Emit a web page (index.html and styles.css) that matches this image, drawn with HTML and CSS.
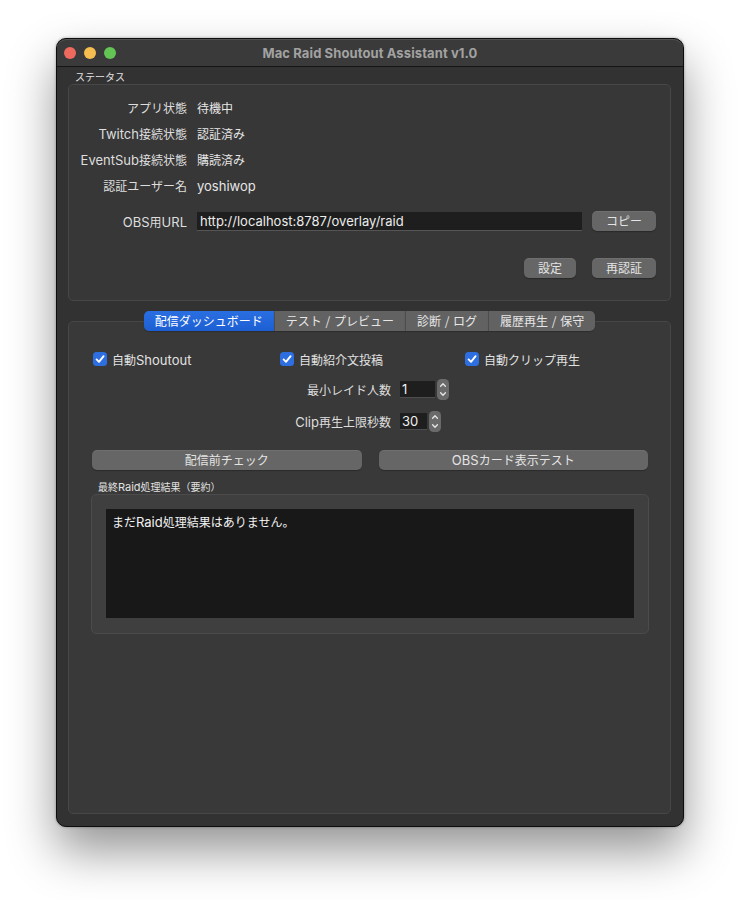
FILE: index.html
```html
<!DOCTYPE html>
<html lang="ja">
<head>
<meta charset="utf-8">
<title>Mac Raid Shoutout Assistant v1.0</title>
<link rel="stylesheet" href="styles.css">
</head>
<body>
<div class="window">
  <header class="titlebar">
    <div class="lights">
      <span class="light red"></span>
      <span class="light yellow"></span>
      <span class="light green"></span>
    </div>
    <div class="title">Mac Raid Shoutout Assistant v1.0</div>
    <div></div>
  </header>

  <main class="content">
    <div class="caption">ステータス</div>
    <section class="group status">
      <div class="form">
        <div class="lbl">アプリ状態</div><div class="val">待機中</div>
        <div class="lbl"><span class="en">Twitch</span>接続状態</div><div class="val">認証済み</div>
        <div class="lbl"><span class="en">EventSub</span>接続状態</div><div class="val">購読済み</div>
        <div class="lbl">認証ユーザー名</div><div class="val"><span class="en">yoshiwop</span></div>
      </div>
      <div class="url-row">
        <div class="lbl"><span class="en">OBS</span>用<span class="en">URL</span></div>
        <div class="field en">http://localhost:8787/overlay/raid</div>
        <button class="btn w64">コピー</button>
      </div>
      <div class="actions">
        <button class="btn w52">設定</button>
        <button class="btn w64">再認証</button>
      </div>
    </section>

    <section class="tabs">
      <nav class="tabbar">
        <div class="tab active">配信ダッシュボード</div>
        <div class="tab">テスト / プレビュー</div>
        <div class="tab">診断 / ログ</div>
        <div class="tab">履歴再生 / 保守</div>
      </nav>
      <div class="pane">
        <div class="checks">
          <label class="check">
            <svg class="box" width="14" height="14" viewBox="0 0 14 14"><rect width="14" height="14" rx="3.5" fill="#2d6fe0"/><path d="M3.6 7.4 L6 9.8 L10.6 4.2" fill="none" stroke="#fff" stroke-width="1.9" stroke-linecap="round" stroke-linejoin="round"/></svg>
            <span>自動<span class="en">Shoutout</span></span>
          </label>
          <label class="check">
            <svg class="box" width="14" height="14" viewBox="0 0 14 14"><rect width="14" height="14" rx="3.5" fill="#2d6fe0"/><path d="M3.6 7.4 L6 9.8 L10.6 4.2" fill="none" stroke="#fff" stroke-width="1.9" stroke-linecap="round" stroke-linejoin="round"/></svg>
            <span>自動紹介文投稿</span>
          </label>
          <label class="check">
            <svg class="box" width="14" height="14" viewBox="0 0 14 14"><rect width="14" height="14" rx="3.5" fill="#2d6fe0"/><path d="M3.6 7.4 L6 9.8 L10.6 4.2" fill="none" stroke="#fff" stroke-width="1.9" stroke-linecap="round" stroke-linejoin="round"/></svg>
            <span>自動クリップ再生</span>
          </label>
        </div>

        <div class="spins">
          <div class="lbl">最小レイド人数</div>
          <div class="spin">
            <div class="spin-field en wide">1</div>
            <svg class="stepper" width="12" height="21" viewBox="0 0 12 21"><rect width="12" height="21" rx="4.5" fill="#6a6a6a"/><path d="M3.6 7.2 L6 4.8 L8.4 7.2 M3.6 13.8 L6 16.2 L8.4 13.8" fill="none" stroke="#e8e8e8" stroke-width="1.3" stroke-linecap="round" stroke-linejoin="round"/></svg>
          </div>
          <div class="lbl"><span class="en">Clip</span>再生上限秒数</div>
          <div class="spin">
            <div class="spin-field en">30</div>
            <svg class="stepper" width="12" height="21" viewBox="0 0 12 21"><rect width="12" height="21" rx="4.5" fill="#6a6a6a"/><path d="M3.6 7.2 L6 4.8 L8.4 7.2 M3.6 13.8 L6 16.2 L8.4 13.8" fill="none" stroke="#e8e8e8" stroke-width="1.3" stroke-linecap="round" stroke-linejoin="round"/></svg>
          </div>
        </div>

        <div class="wide-buttons">
          <button class="btn">配信前チェック</button>
          <button class="btn"><span class="en">OBS</span>カード表示テスト</button>
        </div>

        <div class="caption small">最終<span class="en">Raid</span>処理結果（要約）</div>
        <div class="group result">
          <div class="textarea">まだ<span class="en">Raid</span>処理結果はありません。</div>
        </div>
      </div>
    </section>
  </main>
</div>
</body>
</html>
```

FILE: styles.css
```css
html, body {
  margin: 0;
  padding: 0;
}

body {
  background: #ffffff;
  font-family: "Noto Sans CJK JP", "Inter", sans-serif;
  font-size: 12px;
  color: #dcdcdc;
  height: 900px;
  overflow: hidden;
}

.en {
  font-family: "Inter", "Noto Sans CJK JP", sans-serif;
  font-size: 13px;
}

.window {
  margin: 38px 0 0 56px;
  width: 628px;
  height: 789px;
  box-sizing: border-box;
  border: 1px solid #0d0d0d;
  border-radius: 10px;
  background: #323232;
  box-shadow: 0 24px 48px rgba(0, 0, 0, 0.42), 0 0 3px rgba(0, 0, 0, 0.35);
  overflow: hidden;
  display: flex;
  flex-direction: column;
}

/* title bar */
.titlebar {
  height: 27px;
  flex: 0 0 27px;
  border-bottom: 1px solid #151515;
  background: #3a3a3a;
  display: grid;
  grid-template-columns: 1fr auto 1fr;
  align-items: center;
  border-radius: 9px 9px 0 0;
  box-shadow: inset 0 1px 0 #555;
}

.lights {
  display: flex;
  gap: 8px;
  padding-left: 7px;
}

.light {
  width: 12px;
  height: 12px;
  border-radius: 50%;
  display: block;
}
.light.red { background: #ee6a5f; }
.light.yellow { background: #f5be4f; }
.light.green { background: #62c554; }

.title {
  font-family: "Inter", sans-serif;
  font-weight: 700;
  font-size: 13px;
  color: #a2a2a2;
  letter-spacing: 0.1px;
}

/* content */
.content {
  padding: 0 12px 0 11px;
  display: flex;
  flex-direction: column;
}

.caption {
  font-size: 10px;
  line-height: 14px;
  padding: 3px 0 0 7px;
  color: #e2e2e2;
}
.caption .en { font-size: 11px; }

.group {
  box-sizing: border-box;
  border: 1px solid #474747;
  border-radius: 5px;
}

.status {
  height: 217px;
  background: #373737;
  padding: 9px 14px 0 0;
}

.form {
  display: grid;
  grid-template-columns: 118px 1fr;
  column-gap: 10px;
  grid-auto-rows: 26px;
  align-items: center;
}

.lbl {
  text-align: right;
  white-space: nowrap;
  color: #dedede;
}

.val {
  color: #e6e6e6;
  white-space: nowrap;
}

.url-row {
  margin-top: 13px;
  display: grid;
  grid-template-columns: 118px 1fr 64px;
  column-gap: 10px;
  align-items: center;
  height: 20px;
}

.field {
  height: 19px;
  box-sizing: border-box;
  background: #1e1e1e;
  border-bottom: 1px solid #555;
  padding: 0 3px;
  line-height: 18px;
  color: #ececec;
  white-space: nowrap;
  overflow: hidden;
}

.actions {
  margin-top: 27px;
  display: flex;
  justify-content: flex-end;
  gap: 16px;
}

.btn {
  height: 20px;
  border: 0;
  border-radius: 5px;
  background: #666666;
  color: #e4e4e4;
  font-family: "Noto Sans CJK JP", "Inter", sans-serif;
  font-size: 12px;
  line-height: 20px;
  padding: 0;
  text-align: center;
  box-shadow: 0 1px 1px rgba(0, 0, 0, 0.25), inset 0 1px 0 rgba(255, 255, 255, 0.06);
  cursor: default;
}
.w52 { width: 52px; }
.w64 { width: 64px; }

/* tabs */
.tabs {
  margin-top: 10px;
  display: flex;
  flex-direction: column;
}

.tabbar {
  display: flex;
  justify-content: center;
  height: 20px;
  position: relative;
  z-index: 1;
}

.tab {
  padding: 0 11px;
  line-height: 20px;
  background: #626262;
  color: #e6e6e6;
  border-left: 1px solid #4d4d4d;
  white-space: nowrap;
  word-spacing: 1px;
  box-shadow: 0 1px 1px rgba(0, 0, 0, 0.2);
}
.tab:first-child {
  border-left: 0;
  border-radius: 5px 0 0 5px;
}
.tab:last-child {
  border-radius: 0 5px 5px 0;
}
.tab.active {
  background: linear-gradient(#2a6fe2, #1c5fd3);
  color: #ffffff;
}

.pane {
  margin-top: -10px;
  height: 493px;
  box-sizing: border-box;
  border: 1px solid #474747;
  border-radius: 5px;
  background: #393939;
  padding: 27px 22px 0 23px;
  display: flex;
  flex-direction: column;
}

.checks {
  display: grid;
  grid-template-columns: 187px 185px 1fr;
  height: 20px;
  align-items: center;
}

.check {
  display: flex;
  align-items: center;
  gap: 5px;
  padding-left: 1px;
  white-space: nowrap;
  color: #e2e2e2;
}

.box { display: block; flex: none; }

.spins {
  margin-top: 10px;
  display: grid;
  grid-template-columns: 299px auto;
  column-gap: 9px;
  row-gap: 11px;
  grid-auto-rows: 21px;
  align-items: center;
}

.spin {
  display: flex;
  align-items: center;
  gap: 2px;
}

.spin-field {
  width: 27px;
  height: 17px;
  box-sizing: border-box;
  background: #1e1e1e;
  border-bottom: 1px solid #4d4d4d;
  padding-left: 2px;
  line-height: 17px;
  color: #f0f0f0;
}
.spin-field.wide { width: 35px; }

.stepper { display: block; }

.wide-buttons {
  margin-top: 18px;
  display: grid;
  grid-template-columns: 1fr 1fr;
  column-gap: 17px;
}

.caption.small {
  margin-top: 10px;
  padding: 0 0 0 6px;
}

.result {
  margin: 0 -1px;
  height: 140px;
  background: #3f3f3f;
  border-color: #4b4b4b;
  padding: 14px;
}

.textarea {
  height: 109px;
  box-sizing: border-box;
  background: #181818;
  padding: 5px 6px;
  line-height: 16px;
  color: #f2f2f2;
}
```
